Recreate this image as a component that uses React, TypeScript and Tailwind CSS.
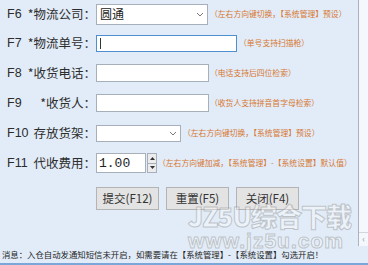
import React from "react";

const cjk = "font-['Noto_Sans_CJK_SC','Noto_Sans',sans-serif]";
const lat = "font-['Liberation_Sans','Noto_Sans_CJK_SC',sans-serif]";

function Hint({ children, className = "" }: { children: React.ReactNode; className?: string }) {
  return (
    <span className={`${cjk} text-[7.8px] leading-none text-[#d8762f] whitespace-nowrap ${className}`}>
      {children}
    </span>
  );
}

function Label({ fkey, text }: { fkey: string; text: string }) {
  return (
    <>
      <span className={`${lat} w-[20px] shrink-0 text-[12.5px] text-[#2d2d2d] leading-none`}>{fkey}</span>
      <span className={`${cjk} w-[69px] shrink-0 flex justify-end text-[12.5px] text-[#2d2d2d] leading-none whitespace-nowrap`}>
        {text}
      </span>
    </>
  );
}

function Chevron() {
  return (
    <svg width="8" height="5" viewBox="0 0 8 5" className="shrink-0">
      <path d="M1 1 L4 4 L7 1" fill="none" stroke="#7a7a7a" strokeWidth="1" />
    </svg>
  );
}

export default function App() {
  return (
    <div className="w-[368px] h-[265px] bg-[#e1ecf8] flex flex-col overflow-hidden relative">
      <div className="flex h-[246px]">
        <div className="w-[359px] border-r border-[#a9b3bf] flex flex-col pl-[7px]">
          {/* F6 */}
          <div className="flex items-center h-[28px]">
            <Label fkey="F6" text="*物流公司：" />
            <div className="w-[112px] h-[21px] bg-white border border-[#a7afba] flex items-center justify-between pl-[3px] pr-[3px]">
              <span className={`${cjk} text-[12px] text-[#222] leading-none`}>圆通</span>
              <Chevron />
            </div>
            <Hint className="ml-[2px]">（左右方向键切换，【系统管理】预设）</Hint>
          </div>
          {/* F7 */}
          <div className="flex items-center h-[30px]">
            <Label fkey="F7" text="*物流单号：" />
            <div className="w-[141px] h-[17px] bg-white border border-[#4f8fd0] flex items-center pl-[3px]">
              <span className="w-px h-[11px] bg-[#333]" />
            </div>
            <Hint className="ml-[2px]">（单号支持扫描枪）</Hint>
          </div>
          {/* F8 */}
          <div className="flex items-center h-[30px]">
            <Label fkey="F8" text="*收货电话：" />
            <div className="w-[113px] h-[18px] bg-white border border-[#a7afba]" />
            <Hint className="ml-[1px]">（电话支持后四位检索）</Hint>
          </div>
          {/* F9 */}
          <div className="flex items-center h-[30px]">
            <Label fkey="F9" text="*收货人：" />
            <div className="w-[113px] h-[18px] bg-white border border-[#a7afba]" />
            <Hint className="ml-[1px]">（收货人支持拼音首字母检索）</Hint>
          </div>
          {/* F10 */}
          <div className="flex items-center h-[30px]">
            <Label fkey="F10" text="存放货架：" />
            <div className="w-[85px] h-[17px] bg-white border border-[#a7afba] flex items-center justify-end pr-[3px]">
              <Chevron />
            </div>
            <Hint className="ml-[2px]">（左右方向键切换，【系统管理】预设）</Hint>
          </div>
          {/* F11 */}
          <div className="flex items-center h-[30px]">
            <Label fkey="F11" text="代收费用：" />
            <div className="w-[50px] h-[20px] bg-white border border-[#a7afba] flex items-center pl-[2px]">
              <span className="font-['Liberation_Mono',monospace] text-[13px] text-[#222] leading-none">1.00</span>
            </div>
            <div className="w-[10px] h-[20px] flex flex-col ml-[1px]">
              <div className="flex-1 bg-[#ececec] border border-[#a7afba] flex items-center justify-center">
                <svg width="5" height="3" viewBox="0 0 5 3"><path d="M0 3 L2.5 0 L5 3 Z" fill="#333" /></svg>
              </div>
              <div className="flex-1 bg-[#ececec] border border-t-0 border-[#a7afba] flex items-center justify-center">
                <svg width="5" height="3" viewBox="0 0 5 3"><path d="M0 0 L2.5 3 L5 0 Z" fill="#333" /></svg>
              </div>
            </div>
            <Hint className="ml-[1px]">（左右方向键加减，【系统管理】-【系统设置】默认值）</Hint>
          </div>
          {/* Buttons */}
          <div className="flex gap-[7px] pl-[89px] mt-[9px]">
            {["提交(F12)", "重置(F5)", "关闭(F4)"].map((t) => (
              <button
                key={t}
                className={`${cjk} w-[63px] h-[23px] bg-[#e3e3e3] border border-[#b4b4b4] text-[11.5px] text-[#333] leading-none flex items-center justify-center`}
              >
                {t}
              </button>
            ))}
          </div>
        </div>
        <div className="flex-1 bg-[#f4f7fb] flex flex-col justify-end">
          <div className="h-[12px] flex items-center justify-center border-t border-[#d0d6de] mb-[2px]">
            <span className="text-[8px] text-[#9aa3ad] leading-none">‹</span>
          </div>
        </div>
      </div>
      <div className="flex-1 flex items-center pl-[2px] border-b-2 border-[#7aa6da]">
        <span className={`${cjk} text-[8.4px] text-[#1e1e1e] leading-none whitespace-nowrap`}>
          消息：入仓自动发通知短信未开启，如需要请在【系统管理】-【系统设置】勾选开启！
        </span>
      </div>

      {/* watermark */}
      <div className="absolute left-[188px] top-[203px] pointer-events-none flex flex-col items-start">
        <span className={`${cjk} text-[26px] font-black leading-none text-[rgba(255,255,255,0.35)] [-webkit-text-stroke:1px_rgba(150,150,150,0.5)] whitespace-nowrap tracking-[-1px]`}>
          JZ5U综合下载
        </span>
        <span className="font-['Liberation_Sans',sans-serif] text-[21px] font-bold leading-none text-[rgba(255,255,255,0.35)] [-webkit-text-stroke:1px_rgba(150,150,150,0.5)] whitespace-nowrap tracking-[1px] mt-[1px]">
          www.jz5u.com
        </span>
      </div>
    </div>
  );
}
